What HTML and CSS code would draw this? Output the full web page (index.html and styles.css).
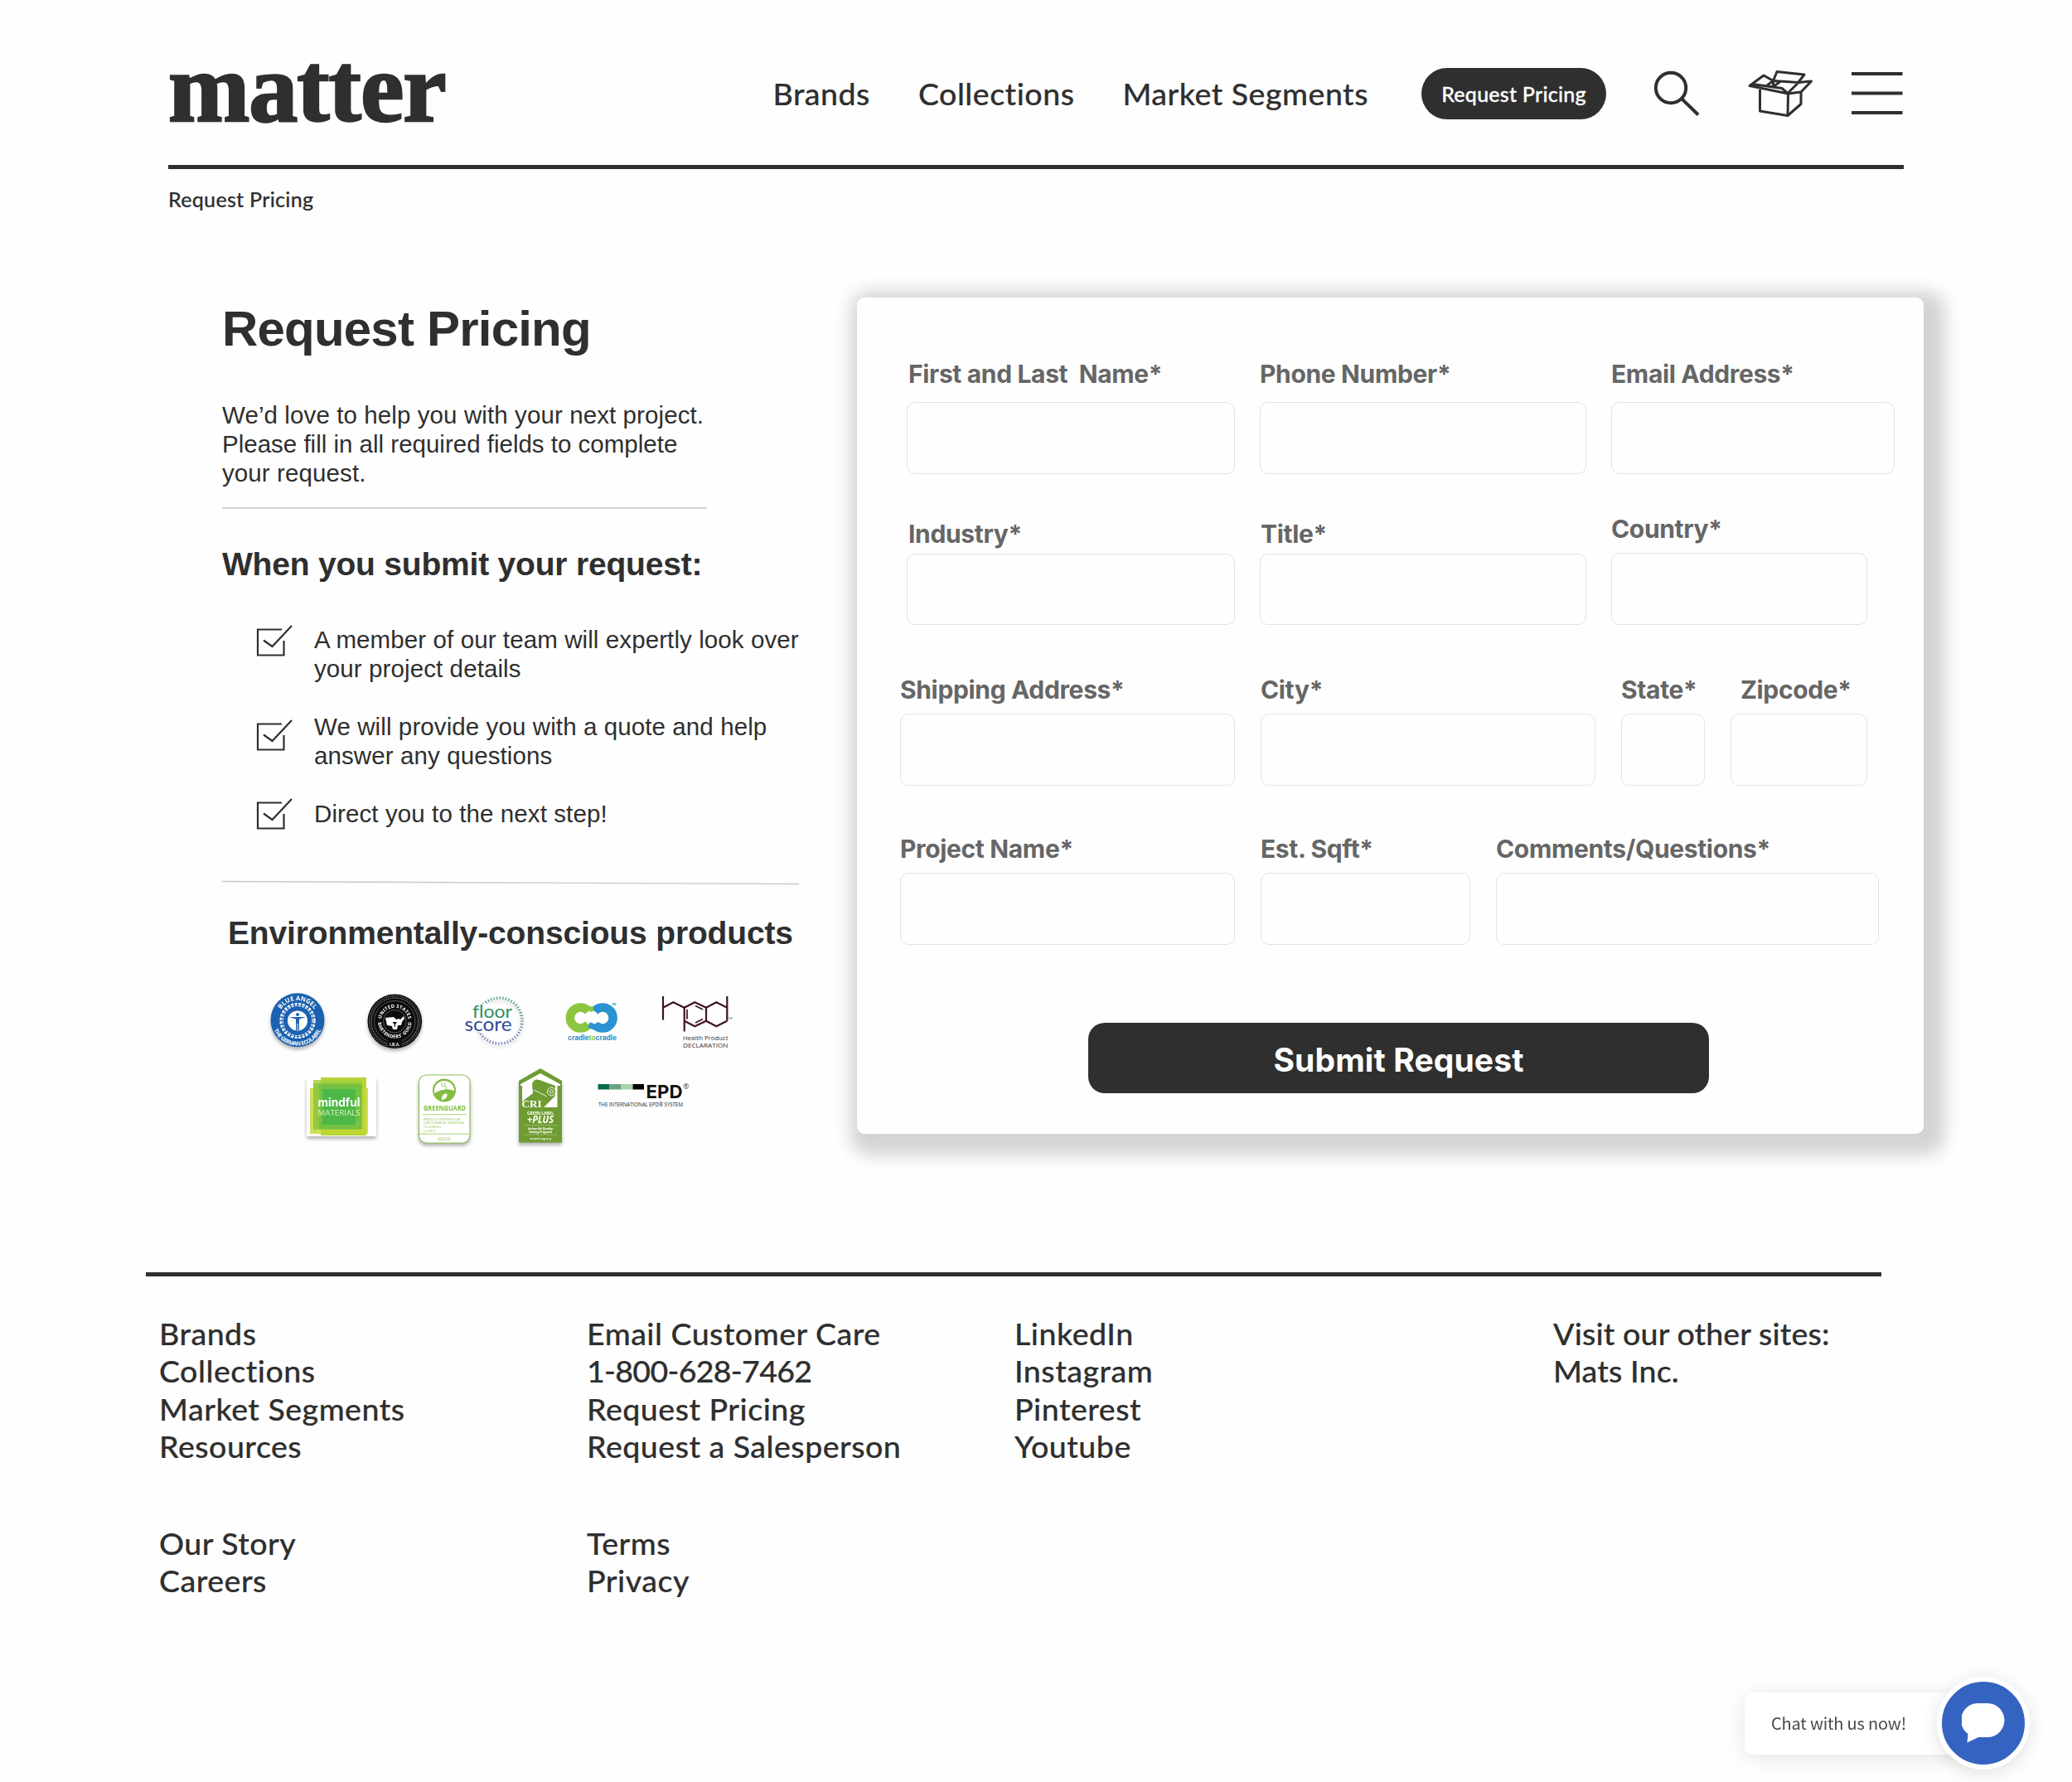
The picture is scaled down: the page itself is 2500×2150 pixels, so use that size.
FILE: index.html
```html
<!DOCTYPE html>
<html lang="en">
<head>
    <meta charset="UTF-8">
    <meta name="viewport" content="width=device-width, initial-scale=1.0">
    <title>Request Pricing - matter</title>
    <link rel="stylesheet" href="styles.css">
</head>
<body>
    <header class="header">
        <a class="logo" href="#">matter</a>
        <nav class="nav">
            <a href="#">Brands</a>
            <a href="#">Collections</a>
            <a href="#">Market Segments</a>
        </nav>
        <a class="pill" href="#">Request Pricing</a>
        <svg class="icon-search" width="62" height="62" viewBox="0 0 62 62" fill="none" stroke="#2f2f2f" stroke-width="4">
            <circle cx="24" cy="24" r="18.2"/>
            <path d="M37 37 L57 56.5"/>
        </svg>
        <svg class="icon-box" width="80" height="62" viewBox="0 0 80 62" fill="none" stroke="#2f2f2f" stroke-width="3" stroke-linejoin="round">
            <path d="M15.5 26 V52 L49 57.5 L65 43.5 V28"/>
            <path d="M49.5 31 L49 57.5"/>
            <path d="M3 21.5 L20 9 L31.5 15.5 L24 21"/>
            <path d="M3 21.5 L10 20 L42 24.5 L49.5 31 Z"/>
            <path d="M31.5 22.5 V15.5 L36 4.5 L69 8 L62 17"/>
            <path d="M31.5 15.5 L62 17.5 L49.5 30"/>
            <path d="M62 17.5 L77.5 16 L65 29 L49.5 31"/>
            <path d="M31.5 22.5 L40 16.5"/>
        </svg>
        <svg class="icon-menu" width="64" height="62" viewBox="0 0 64 62" stroke="#2f2f2f" stroke-width="4">
            <path d="M1 7 H62.5 M1 30.5 H62.5 M1 54 H62.5"/>
        </svg>
    </header>

    <div class="breadcrumb">Request Pricing</div>

    <main class="main">
        <section class="intro">
            <h1>Request Pricing</h1>
            <p class="lead">We’d love to help you with your next project.<br><span class="tight">Please fill in all required fields to complete</span><br>your request.</p>
            <div class="rule"></div>
            <h2>When you submit your request:</h2>
            <ul class="steps">
                <li>
                    <svg class="check" width="44" height="40" viewBox="0 0 44 40"><path d="M31 5.5 H2 V36.5 H33.5 V19"/><path d="M9 18.5 L19.5 26 L43 1"/></svg>
                    <span>A member of our team will expertly look over<br>your project details</span>
                </li>
                <li>
                    <svg class="check check-low" width="44" height="40" viewBox="0 0 44 40"><path d="M31 5.5 H2 V36.5 H33.5 V19"/><path d="M9 18.5 L19.5 26 L43 1"/></svg>
                    <span>We will provide you with a quote and help<br>answer any questions</span>
                </li>
                <li>
                    <svg class="check check-high" width="44" height="40" viewBox="0 0 44 40"><path d="M31 5.5 H2 V36.5 H33.5 V19"/><path d="M9 18.5 L19.5 26 L43 1"/></svg>
                    <span>Direct you to the next step!</span>
                </li>
            </ul>
            <svg class="rule-slant" width="696" height="6" viewBox="0 0 696 6"><path d="M0 1.5 L696 4.5" stroke="#c9c9c9" stroke-width="1.4"/></svg>
            <h2 class="env-title">Environmentally-conscious products</h2>

            <div class="badges">
                <!-- Blue Angel -->
                <svg class="badge" width="74" height="76" viewBox="0 0 74 76">
                    <defs>
                        <path id="ba-top" d="M13 37 A24 24 0 0 1 61 37"/>
                        <path id="ba-bottom" d="M6.5 37 A30.5 30.5 0 0 0 67.5 37"/>
                    </defs>
                    <circle cx="37" cy="36.7" r="32.5" fill="#1c62b0"/>
                    <circle cx="37" cy="37.5" r="19.5" fill="none" stroke="#fff" stroke-width="4.2" stroke-dasharray="3 1.4"/>
                    <circle cx="37" cy="37.5" r="19" fill="none" stroke="#1c62b0" stroke-width=".8"/>
                    <circle cx="37" cy="37.5" r="12" fill="#fff"/>
                    <circle cx="37" cy="30" r="2" fill="#1c62b0"/>
                    <path d="M27 33 H47 L39 35.5 L38.8 49 H35.2 L35 35.5 Z" fill="#1c62b0"/>
                    <path d="M37 41 V49" stroke="#fff" stroke-width=".8"/>
                    <text class="badge-text" font-size="7.6" fill="#fff"><textPath href="#ba-top" startOffset="50%" text-anchor="middle" textLength="47">BLUE ANGEL</textPath></text>
                    <text class="badge-text" font-size="6.6" fill="#fff"><textPath href="#ba-bottom" startOffset="50%" text-anchor="middle" textLength="72">THE GERMAN ECOLABEL</textPath></text>
                </svg>
                <!-- Bartenders guild -->
                <svg class="badge" width="74" height="76" viewBox="0 0 74 76">
                    <defs>
                        <path id="bg-top" d="M20.8 38.3 A16.5 16.5 0 0 1 53.8 38.3"/>
                        <path id="bg-bottom" d="M17 38.3 A20.3 20.3 0 0 0 57.6 38.3"/>
                    </defs>
                    <circle cx="37.3" cy="38.3" r="32.8" fill="#0b0b0b"/>
                    <circle cx="37.3" cy="38.3" r="30.8" fill="none" stroke="#777" stroke-width=".7"/>
                    <circle cx="37.3" cy="38.3" r="28.3" fill="none" stroke="#888" stroke-width="1.4" stroke-dasharray="1.4 1.2"/>
                    <circle cx="37.3" cy="38.3" r="24.8" fill="none" stroke="#777" stroke-width=".7"/>
                    <circle cx="37.3" cy="38.3" r="13.8" fill="none" stroke="#777" stroke-width=".7"/>
                    <path d="M26 34 L36 33 L39 36 L42 35 L44 36 L48 32 L49 35 L46 39 L45 43 L41 43 L40 48 H35 L34 44 L28 43 Z" fill="#fff"/>
                    <path d="M34.5 39 H40 L38 42 V45 H36.8 V42 Z" fill="#0b0b0b"/>
                    <rect x="29" y="61" width="17" height="8" fill="#0b0b0b"/>
                    <text class="badge-text" font-size="5.8" fill="#fff"><textPath href="#bg-top" startOffset="50%" text-anchor="middle" textLength="46">UNITED STATES</textPath></text>
                    <text class="badge-text" font-size="5.6" fill="#fff"><textPath href="#bg-bottom" startOffset="50%" text-anchor="middle" textLength="61">BARTENDERS' GUILD</textPath></text>
                    <text class="badge-text" x="37.3" y="67.5" font-size="5" text-anchor="middle" fill="#fff">I.B.A.</text>
                </svg>
                <!-- FloorScore -->
                <svg width="80" height="76" viewBox="0 0 80 76">
                    <defs>
                        <linearGradient id="fs-ring" x1="0" y1="0" x2="0" y2="1">
                            <stop offset="0" stop-color="#3f9478"/>
                            <stop offset="1" stop-color="#6470b8"/>
                        </linearGradient>
                    </defs>
                    <circle class="badge" cx="46.5" cy="37.5" r="27.5" fill="none" stroke="url(#fs-ring)" stroke-width="3.4" stroke-dasharray="1.2 2.4"/>
                    <rect x="3" y="17" width="42" height="34" fill="#fefefe"/>
                    <text class="badge-lato" x="14" y="34" font-size="22" fill="#2c8f63" textLength="48" lengthAdjust="spacingAndGlyphs">floor</text>
                    <text class="badge-lato" x="4.5" y="50" font-size="23" fill="#2e4a96" textLength="57" lengthAdjust="spacingAndGlyphs">score</text>
                </svg>
                <!-- Cradle to Cradle -->
                <svg width="72" height="76" viewBox="0 0 72 76">
                    <g fill="none" stroke-width="10.6">
                        <path d="M31 26 A12.5 12.5 0 1 0 31 42" stroke="#8cc63f"/>
                        <path d="M38.5 26 A12.5 12.5 0 1 1 38.5 42" stroke="#2b93cf"/>
                        <path d="M24 31 H34 L40 38 H47" stroke="#fff" stroke-width="2.4"/>
                        <path d="M31.5 42.5 L38 45" stroke="#2b93cf" stroke-width="7"/>
                        <path d="M32 24 L37 23" stroke="#8cc63f" stroke-width="6"/>
                    </g>
                    <text class="badge-bold" x="6" y="61" font-size="8.4" fill="#2b93cf" textLength="59" lengthAdjust="spacingAndGlyphs">cradle<tspan fill="#8cc63f">to</tspan>cradle</text>
                    <text class="badge-text" x="59" y="19" font-size="3.6" fill="#2b93cf">TM</text>
                </svg>
                <!-- Health Product Declaration -->
                <svg width="96" height="76" viewBox="0 0 96 76">
                    <g fill="none" stroke="#3d1420" stroke-width="2.2">
                        <path d="M6 8 V36.5 M6 21.7 L18.3 15.3 L31.7 21.7 M83.3 8 V37.7"/>
                        <path d="M31.7 50.5 V21.7 L44.3 15.3 L58 21.7 V37.7 L44.3 44.3 L31.7 37.7"/>
                        <path d="M58 21.7 L70.3 15.3 L83.3 21.7 M58 37.7 L70.3 44.3 L83.3 37.7"/>
                        <path d="M35 24 V35.5 M45 19.5 L54 24 M45 40 L54 35.5" stroke-width="1.7"/>
                    </g>
                    <text class="badge-thin" x="30" y="61" font-size="7.8" fill="#333" textLength="54.5" lengthAdjust="spacingAndGlyphs">Health Product</text>
                    <text class="badge-thin" x="30" y="69.8" font-size="7.8" fill="#333" textLength="54.5" lengthAdjust="spacingAndGlyphs">DECLARATION</text>
                    <text class="badge-thin" x="84.5" y="36" font-size="3.6" fill="#555">TM</text>
                </svg>
            </div>

            <div class="badges badges-second">
                <!-- mindful MATERIALS -->
                <svg class="badge" width="96" height="100" viewBox="0 0 96 100">
                    <rect x="4" y="14" width="84" height="71" fill="#fff"/>
                    <rect x="21" y="14" width="55" height="70" fill="#b7d433"/>
                    <rect x="12" y="17" width="59" height="58" fill="#a3cd39" fill-opacity=".8"/>
                    <rect x="8" y="27" width="70" height="55" fill="#c0d72f" fill-opacity=".8"/>
                    <rect x="12" y="21" width="58" height="56" fill="#86c440" fill-opacity=".75"/>
                    <rect x="19" y="22" width="52" height="54" fill="#6cbd45" fill-opacity=".75"/>
                    <rect x="23" y="28" width="40" height="43" fill="#4db848"/>
                    <text class="badge-bold" x="17.5" y="49" font-size="14" fill="#fff" textLength="51" lengthAdjust="spacingAndGlyphs">mindful</text>
                    <text class="badge-thin" x="17.5" y="59.5" font-size="9.5" fill="#d9f0c0" textLength="51" lengthAdjust="spacingAndGlyphs">MATERIALS</text>
                </svg>
                <!-- GreenGuard -->
                <svg class="badge" width="88" height="100" viewBox="0 0 88 100">
                    <rect x="13.5" y="11" width="61.5" height="82" rx="9" fill="#fff" stroke="#8cc152" stroke-width="1.2"/>
                    <circle cx="44" cy="29.5" r="14" fill="#83bd41"/>
                    <path d="M32 30 A12 12 0 0 1 56 30 Q44 26 32 33 Z" fill="#fff"/>
                    <text class="badge-thin" x="40" y="25" font-size="8" fill="#83bd41">U</text>
                    <text class="badge-thin" x="45" y="28.5" font-size="8" fill="#83bd41">L</text>
                    <path d="M41 42 Q40 34 47 33 Q49 39 42.5 40.5 Z" fill="#fff"/>
                    <text class="badge-text" x="19" y="54" font-size="8" fill="#83bd41" textLength="51" lengthAdjust="spacingAndGlyphs">GREENGUARD</text>
                    <path d="M17.5 58.8 H71 M14 82 H75" stroke="#a9d27a" stroke-width="1"/>
                    <g class="badge-thin" font-size="3.6" fill="#8cc152">
                        <text x="19" y="65.5" textLength="44">PRODUCT CERTIFIED FOR</text>
                        <text x="19" y="70.3" textLength="49">LOW CHEMICAL EMISSIONS</text>
                        <text x="19" y="75.2" textLength="21">UL.COM/GG</text>
                        <text x="19" y="80" textLength="14">UL 2818</text>
                    </g>
                    <text class="badge-thin" x="44" y="89.5" font-size="5.6" fill="#8cc152" text-anchor="middle">GOLD</text>
                </svg>
                <!-- CRI Green Label Plus -->
                <svg class="badge" width="81" height="100" viewBox="0 0 81 100">
                    <path d="M16 92.5 V18 L42 3 L68 18 V92.5 Z" fill="#6f9c32"/>
                    <path d="M18 22 L42 9 L66 22 V24 H62.5 V50 H20 V24 H18 Z" fill="#fff"/>
                    <path d="M20 43 L33 33 L32 22 Q34 15 41 17 L60 24 V36 L46 50 H20 Z" fill="#6f9c32"/>
                    <circle cx="55.5" cy="31" r="5" fill="#6f9c32" stroke="#fff" stroke-width="1"/>
                    <circle cx="55.5" cy="31" r="2" fill="none" stroke="#fff" stroke-width=".9"/>
                    <path d="M34 29 L50 37" stroke="#fff" stroke-width=".9"/>
                    <text class="badge-serif" x="19.5" y="49.5" font-size="13" fill="#fff" textLength="24" lengthAdjust="spacingAndGlyphs">CRI</text>
                    <text class="badge-text" x="26" y="58.6" font-size="4.8" fill="#fff" textLength="32" lengthAdjust="spacingAndGlyphs">GREEN LABEL</text>
                    <text class="badge-italic" x="26" y="69" font-size="13" fill="#fff" textLength="32" lengthAdjust="spacingAndGlyphs">+PLUS</text>
                    <path d="M22 71.5 H62 M22 83 H62" stroke="#b5cf8e" stroke-width=".6"/>
                    <text class="badge-italic" x="27" y="76.5" font-size="4" fill="#fff" textLength="30">Indoor Air Quality</text>
                    <text class="badge-italic" x="28" y="80.8" font-size="4" fill="#fff" textLength="28">Testing Program</text>
                    <text class="badge-text" x="29" y="88.5" font-size="4" fill="#dbe8c6" textLength="26">carpet-rug.org</text>
                </svg>
                <!-- EPD -->
                <svg class="epd" width="112" height="100" viewBox="0 0 112 100">
                    <rect x="0.5" y="22" width="14" height="6.5" fill="#0c6b52"/>
                    <rect x="14.5" y="22" width="14" height="6.5" fill="#6ba080"/>
                    <rect x="28.5" y="22" width="14" height="6.5" fill="#a9d3ab"/>
                    <rect x="42.5" y="22" width="13.5" height="6.5" fill="#000"/>
                    <text class="badge-bold" x="58.5" y="38.5" font-size="22" fill="#111" textLength="44" lengthAdjust="spacingAndGlyphs">EPD</text>
                    <text class="badge-thin" x="103" y="28" font-size="9" fill="#444">®</text>
                    <text class="badge-thin" x="1" y="49" font-size="6.8" fill="#222" textLength="102" lengthAdjust="spacingAndGlyphs">THE INTERNATIONAL EPD® SYSTEM</text>
                </svg>
            </div>
        </section>

        <form class="card">
            <div class="row row-1">
                <div class="field w-a"><label>First and Last&nbsp; Name*</label><input type="text"></div>
                <div class="field w-b"><label>Phone Number*</label><input type="text"></div>
                <div class="field w-email"><label>Email Address*</label><input type="text"></div>
            </div>
            <div class="row row-2">
                <div class="field w-a"><label>Industry*</label><input type="text"></div>
                <div class="field w-b"><label>Title*</label><input type="text"></div>
                <div class="field w-country"><label>Country*</label><input type="text"></div>
            </div>
            <div class="row row-3">
                <div class="field w-c"><label>Shipping Address*</label><input type="text"></div>
                <div class="field w-c"><label>City*</label><input type="text"></div>
                <div class="field w-state"><label>State*</label><input type="text"></div>
                <div class="field w-zip"><label>Zipcode*</label><input type="text"></div>
            </div>
            <div class="row row-4">
                <div class="field w-c"><label>Project Name*</label><input type="text"></div>
                <div class="field w-sqft"><label>Est. Sqft*</label><input type="text"></div>
                <div class="field w-comments"><label>Comments/Questions*</label><input type="text"></div>
            </div>
            <button type="button" class="submit">Submit Request</button>
        </form>
    </main>

    <footer class="footer">
        <div class="footer-col">
            <a href="#">Brands</a>
            <a href="#">Collections</a>
            <a href="#">Market Segments</a>
            <a href="#">Resources</a>
            <a href="#" class="group">Our Story</a>
            <a href="#">Careers</a>
        </div>
        <div class="footer-col">
            <a href="#">Email Customer Care</a>
            <a href="#" class="phone">1-800-628-7462</a>
            <a href="#">Request Pricing</a>
            <a href="#">Request a Salesperson</a>
            <a href="#" class="group">Terms</a>
            <a href="#">Privacy</a>
        </div>
        <div class="footer-col">
            <a href="#">LinkedIn</a>
            <a href="#">Instagram</a>
            <a href="#">Pinterest</a>
            <a href="#">Youtube</a>
        </div>
        <div class="footer-col footer-sites">
            <span>Visit our other sites:</span>
            <a href="#">Mats Inc.</a>
        </div>
    </footer>

    <div class="chat">
        <div class="chat-label">Chat with us now!</div>
        <div class="chat-button">
            <svg width="52" height="50" viewBox="0 0 52 50">
                <path d="M21 1 H31 A20.5 20.5 0 0 1 31 42 H20 L6.5 48.5 L7.5 38 A20.5 20.5 0 0 1 21 1 Z" fill="#fff"/>
            </svg>
        </div>
    </div>
</body>
</html>
```

FILE: styles.css
```css
* {
    box-sizing: border-box;
}
body {
    margin: 0;
    width: 2500px;
    height: 2150px;
    background-color: #fefefe;
    color: #2f2f2f;
    font-family: Lato, sans-serif;
    font-variant-ligatures: none;
    overflow: hidden;
}
a {
    color: inherit;
    text-decoration: none;
}
h1, h2, p, ul {
    margin: 0;
    padding: 0;
}

/* Header */
.header {
    display: flex;
    align-items: center;
    width: 2094px;
    height: 204px;
    margin-left: 203px;
    padding-top: 27px;
    border-bottom: 5px solid #2f2f2f;
    white-space: nowrap;
}
.logo {
    font-family: "Liberation Serif", serif;
    font-weight: bold;
    font-size: 118px;
    line-height: 118px;
    letter-spacing: -1px;
    margin-bottom: 12px;
    -webkit-text-stroke: 2.5px #2f2f2f;
}
.nav {
    display: flex;
    gap: 58px;
    margin-left: auto;
    padding-bottom: 2px;
    font-size: 37.5px;
    font-weight: 500;
    letter-spacing: 0.5px;
    -webkit-text-stroke: 0.2px #2f2f2f;
}
.pill {
    width: 223px;
    height: 62px;
    line-height: 62px;
    margin-left: 64px;
    border-radius: 31px;
    background-color: #2f2f2f;
    color: #fff;
    font-size: 25px;
    font-weight: 500;
    letter-spacing: 0.25px;
    text-align: center;
    -webkit-text-stroke: 0.3px #fff;
}
.icon-search {
    margin-left: 54px;
}
.icon-box {
    margin-left: 54px;
}
.icon-menu {
    margin-left: 45px;
}
.breadcrumb {
    margin: 21px 0 0 203px;
    font-size: 25px;
    line-height: 30px;
    font-weight: 500;
    letter-spacing: 0.3px;
    -webkit-text-stroke: 0.2px #2f2f2f;
}

/* Main */
.main {
    display: flex;
    align-items: flex-start;
    height: 1027px;
    margin-top: 104px;
    padding-left: 268px;
}
.intro {
    width: 766px;
    flex-shrink: 0;
    padding-top: 3px;
    font-family: "Liberation Sans", Arial, sans-serif;
}
h1 {
    font-size: 60px;
    line-height: 70px;
    letter-spacing: -0.8px;
}
h2 {
    margin-top: 44px;
    font-size: 39px;
    line-height: 46px;
    letter-spacing: -0.2px;
}
.lead {
    margin-top: 51px;
    font-size: 29.5px;
    line-height: 35px;
    letter-spacing: 0.1px;
}
.lead .tight {
    letter-spacing: 0;
}
.rule {
    width: 585px;
    height: 2px;
    margin-top: 24px;
    background-color: #d3d3d3;
}
.steps {
    display: flex;
    flex-direction: column;
    gap: 35px;
    margin-top: 50px;
    list-style: none;
    font-size: 29.5px;
    line-height: 35px;
    letter-spacing: 0.1px;
}
.steps li {
    display: flex;
    align-items: flex-start;
    gap: 26px;
    padding-left: 41px;
}
.check {
    flex-shrink: 0;
    fill: none;
    stroke: #2f2f2f;
    stroke-width: 2.2;
}
.check-low {
    margin-top: 9px;
}
.check-high {
    margin-top: -1px;
}
.rule-slant {
    display: block;
    margin-top: 59px;
}
.env-title {
    margin-top: 35px;
    margin-left: 7px;
    letter-spacing: -0.15px;
}

/* Certification badges */
.badges {
    display: flex;
    gap: 43px;
    margin-top: 45px;
    padding-left: 54px;
}
.badges-second {
    gap: 30px;
    margin-top: 16px;
    padding-left: 98px;
}
.badge {
    filter: drop-shadow(0 3px 2px rgba(0, 0, 0, 0.3));
}
.epd {
    overflow: visible;
}
.badge-text {
    font-family: "Open Sans", sans-serif;
    font-weight: bold;
}
.badge-bold {
    font-family: Inter, sans-serif;
    font-weight: bold;
}
.badge-thin {
    font-family: "Open Sans", sans-serif;
}
.badge-lato {
    font-family: Lato, sans-serif;
}
.badge-serif {
    font-family: "Liberation Serif", serif;
    font-weight: bold;
}
.badge-italic {
    font-family: "Open Sans", sans-serif;
    font-style: italic;
    font-weight: bold;
}

/* Form card */
.card {
    width: 1287px;
    height: 1009px;
    border-radius: 9px;
    background-color: #fefefe;
    box-shadow: 9px 9px 20px 17px rgba(0, 0, 0, 0.17);
    padding-top: 74px;
    font-family: Inter, sans-serif;
}
.row {
    display: flex;
    align-items: flex-end;
}
.row-1, .row-2 {
    gap: 30px;
    padding-left: 60px;
}
.row-3, .row-4 {
    gap: 31px;
    padding-left: 52px;
}
.row-2 {
    margin-top: 48px;
}
.row-3 {
    margin-top: 60px;
}
.row-4 {
    margin-top: 58px;
}
.field {
    display: flex;
    flex-direction: column;
    gap: 11px;
}
.field label {
    color: #666;
    font-size: 30px;
    line-height: 36px;
    font-weight: 700;
    letter-spacing: -0.35px;
    white-space: nowrap;
}
.field input {
    width: 100%;
    height: 87px;
    border: 1.5px solid #dfe4e6;
    border-radius: 10px;
    background-color: #fefefe;
    outline: none;
}
.row-1 .field {
    gap: 16px;
}
.row-2 .w-a, .row-2 .w-b {
    gap: 6px;
}
.row-2 .w-a input, .row-2 .w-b input {
    height: 86px;
}
.row-1 .w-a label, .row-2 .w-a label {
    padding-left: 2px;
}
.row-2 .w-b label {
    padding-left: 1px;
}
.w-a {
    width: 396px;
}
.w-b {
    width: 394px;
}
.w-email {
    width: 342px;
}
.w-country {
    width: 309px;
}
.w-c {
    width: 404px;
}
.w-state {
    width: 101px;
}
.w-zip {
    width: 165px;
}
.w-zip label {
    padding-left: 12px;
}
.w-sqft {
    width: 253px;
}
.w-comments {
    width: 462px;
}
.submit {
    display: block;
    width: 749px;
    height: 85px;
    margin: 94px 0 0 279px;
    padding-top: 4px;
    border: none;
    border-radius: 20px;
    background-color: #2f2f2f;
    color: #fff;
    font-family: Inter, sans-serif;
    font-size: 39px;
    font-weight: 700;
    letter-spacing: 0.1px;
}

/* Footer */
.footer {
    display: grid;
    grid-template-columns: 516px 516px 650px auto;
    width: 2094px;
    margin: 149px 0 0 176px;
    padding: 46px 0 0 16px;
    border-top: 5px solid #2f2f2f;
    font-size: 37.5px;
    line-height: 45.3px;
    font-weight: 500;
    letter-spacing: 0.5px;
    -webkit-text-stroke: 0.2px #2f2f2f;
}
.footer-col {
    display: flex;
    flex-direction: column;
    white-space: nowrap;
}
.footer-col .group {
    margin-top: 72px;
}
.footer-col .phone {
    letter-spacing: -0.7px;
}
.footer-sites {
    letter-spacing: 0.15px;
}

/* Chat widget */
.chat {
    position: fixed;
    right: 51px;
    bottom: 15px;
    display: flex;
    align-items: center;
}
.chat-label {
    width: 288px;
    height: 75px;
    margin-right: -56px;
    padding-left: 32px;
    border-radius: 10px;
    background-color: #fff;
    box-shadow: 0 4px 24px rgba(0, 0, 0, 0.1);
    color: #4a4a4a;
    font-family: "Noto Sans CJK SC", sans-serif;
    font-size: 20px;
    line-height: 74px;
    letter-spacing: -0.2px;
}
.chat-button {
    display: flex;
    align-items: center;
    justify-content: center;
    width: 112px;
    height: 112px;
    border: 6px solid #fff;
    border-radius: 50%;
    background-color: #3563c1;
    box-shadow: 0 4px 22px rgba(0, 0, 0, 0.12);
    z-index: 1;
}
```
